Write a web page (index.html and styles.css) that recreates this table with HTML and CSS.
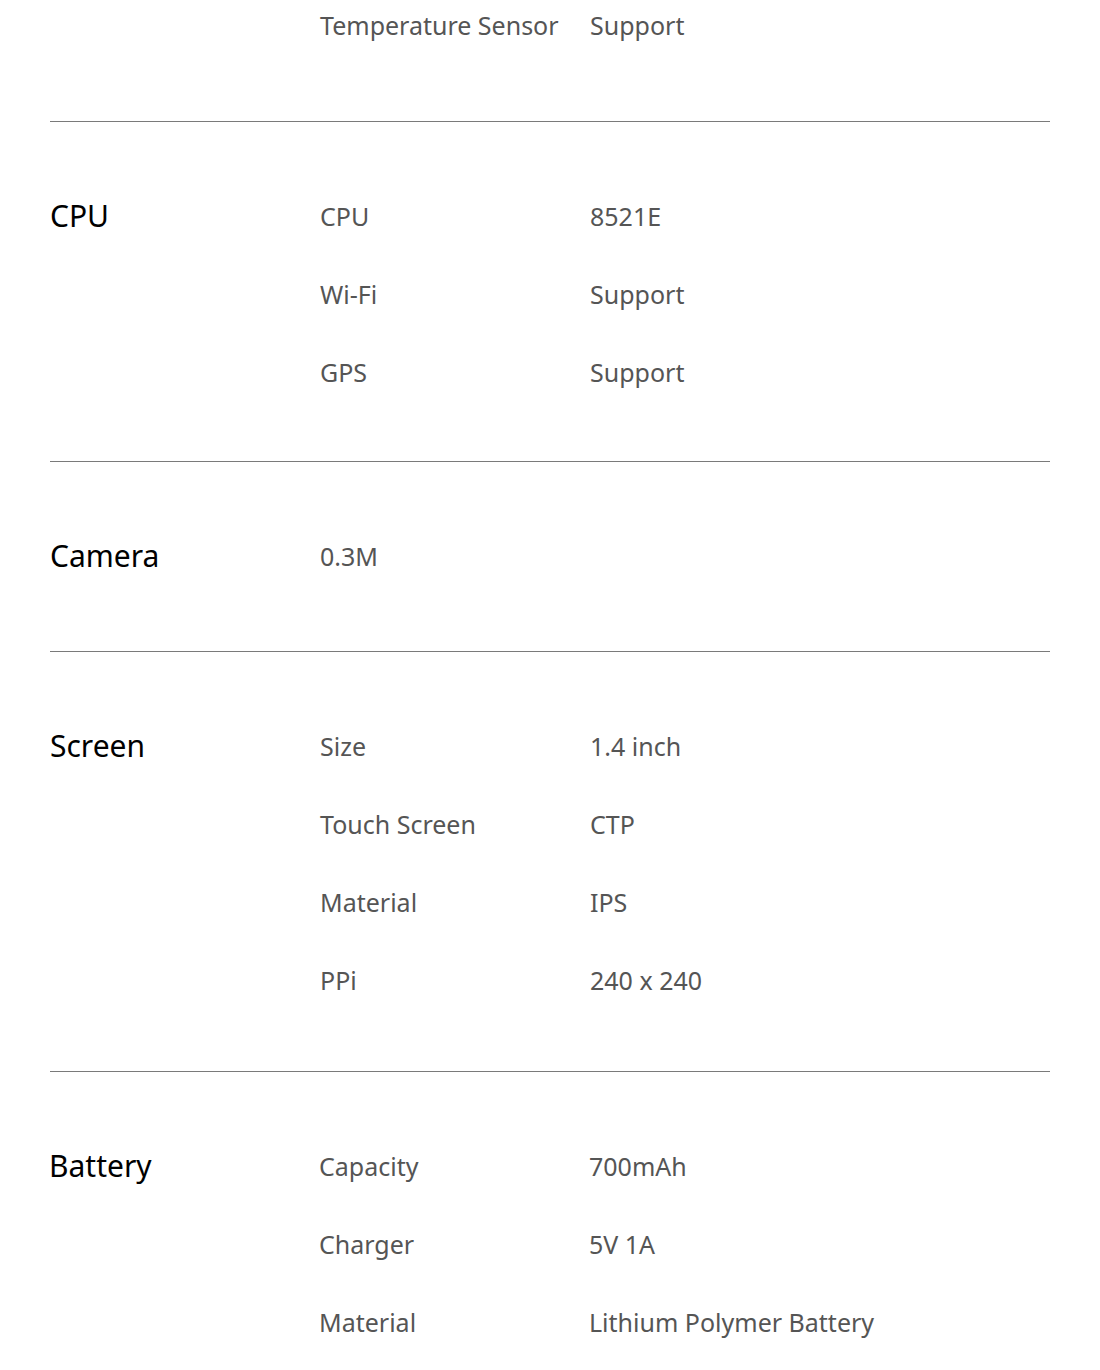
FILE: index.html
```html
<!DOCTYPE html>
<html lang="en">
<head>
<meta charset="utf-8">
<title>Specs</title>
<link rel="stylesheet" href="styles.css">
</head>
<body>
<div class="specs">
  <section class="group group-top">
    <div class="group-title"></div>
    <div class="rows">
      <div class="row"><span class="key">Temperature Sensor</span><span class="val">Support</span></div>
    </div>
  </section>
  <section class="group">
    <div class="group-title">CPU</div>
    <div class="rows">
      <div class="row"><span class="key">CPU</span><span class="val">8521E</span></div>
      <div class="row"><span class="key">Wi-Fi</span><span class="val">Support</span></div>
      <div class="row"><span class="key">GPS</span><span class="val">Support</span></div>
    </div>
  </section>
  <section class="group">
    <div class="group-title">Camera</div>
    <div class="rows">
      <div class="row"><span class="key">0.3M</span></div>
    </div>
  </section>
  <section class="group group-screen">
    <div class="group-title">Screen</div>
    <div class="rows">
      <div class="row"><span class="key">Size</span><span class="val">1.4 inch</span></div>
      <div class="row"><span class="key">Touch Screen</span><span class="val">CTP</span></div>
      <div class="row"><span class="key">Material</span><span class="val">IPS</span></div>
      <div class="row"><span class="key">PPi</span><span class="val">240 x 240</span></div>
    </div>
  </section>
  <section class="group group-battery">
    <div class="group-title">Battery</div>
    <div class="rows">
      <div class="row"><span class="key">Capacity</span><span class="val">700mAh</span></div>
      <div class="row"><span class="key">Charger</span><span class="val">5V 1A</span></div>
      <div class="row"><span class="key">Material</span><span class="val">Lithium Polymer Battery</span></div>
    </div>
  </section>
</div>
</body>
</html>
```
FILE: styles.css
```css
html, body {
  margin: 0;
  padding: 0;
  background: #fff;
}
body {
  font-family: "Noto Sans", "Open Sans", sans-serif;
}
.specs {
  width: 1000px;
  margin: 0 50px;
}
.group {
  display: flex;
  padding: 76px 0 71px;
  border-bottom: 1px solid #7a7a7a;
}
.group-top {
  padding-top: 7px;
  padding-bottom: 72px;
}
.group-screen {
  padding-bottom: 73px;
}
.group:last-child {
  border-bottom: none;
}
.group-battery {
  margin-left: -1px;
}
.group-title {
  width: 270px;
  flex: none;
  font-size: 30px;
  line-height: 36px;
  color: #000;
}
.rows {
  display: flex;
  flex-direction: column;
  gap: 42px;
  min-height: 42px;
}
.row {
  display: flex;
  height: 36px;
  align-items: center;
  font-size: 25px;
  line-height: 36px;
  color: #555;
}
.key {
  width: 270px;
  flex: none;
}
```
